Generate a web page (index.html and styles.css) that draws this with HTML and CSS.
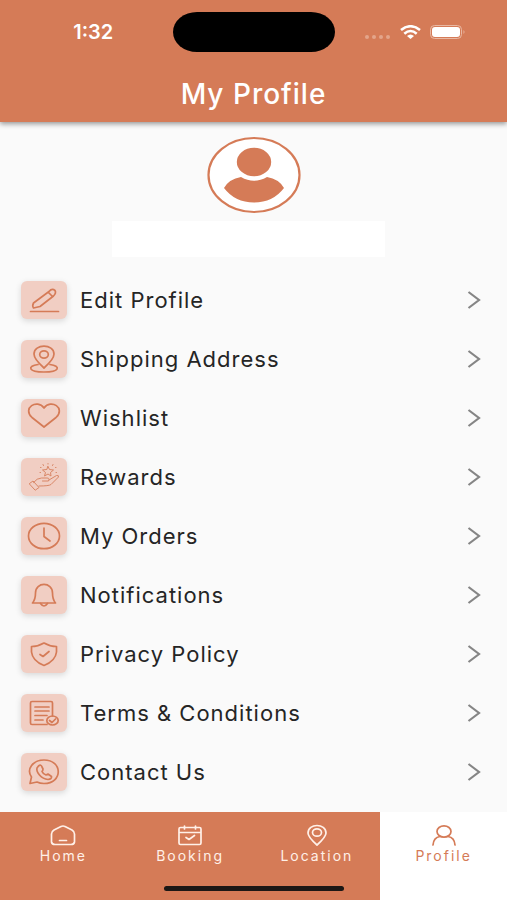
FILE: index.html
```html
<!DOCTYPE html>
<html lang="en">
<head>
    <meta charset="UTF-8">
    <meta name="viewport" content="width=device-width, initial-scale=1.0">
    <title>My Profile</title>
    <link rel="stylesheet" href="styles.css">
</head>
<body>
    <header class="header">
        <div class="status-bar">
            <span class="time">1:32</span>
            <div class="island"></div>
            <div class="status-icons">
                <svg class="dots" width="26" height="4" viewBox="0 0 26 4"><circle cx="2" cy="2" r="2"/><circle cx="9" cy="2" r="2"/><circle cx="16" cy="2" r="2"/><circle cx="23" cy="2" r="2"/></svg>
                <svg width="21" height="14" viewBox="0 0 21 14" fill="none" stroke="#fff" stroke-width="2.6"><path d="M1 5Q10.500-2.500 20 5M4.300 8.700Q10.500 3.300 16.700 8.700"/><path d="M7 11Q10.500 8 14 11L10.500 14Z" fill="#fff" stroke="none"/></svg>
                <svg width="36" height="14" viewBox="0 0 36 14"><rect x="0.500" y="0.500" width="31" height="13" rx="4" fill="none" stroke="#e9b8a3"/><rect x="2" y="2" width="28" height="10" rx="3" fill="#fff"/><path d="M33.500 5v4q2-2 0-4" fill="#e9b8a3"/></svg>
            </div>
        </div>
        <h1>My Profile</h1>
    </header>

    <main class="content">
        <svg class="avatar" width="94" height="78" viewBox="0 0 94 78">
            <ellipse cx="47" cy="39" rx="45.500" ry="37" fill="#fff" stroke="#d57b57" stroke-width="2.200"/>
            <ellipse cx="47" cy="26" rx="17.200" ry="14.300" fill="#d57b57"/>
            <path d="M34 41Q47 48.500 60 41Q72 43 77 52Q66 66.500 47 66.500Q28 66.500 17 52Q22 43 34 41Z" fill="#d57b57"/>
        </svg>
        <div class="user-name"></div>

        <ul class="menu">
            <li>
                <a href="#" class="menu-item">
                    <span class="tile"><svg class="icon" viewBox="0 0 46 38"><path d="M9.500 30.500h28"/><path d="M12.500 22L28 10.500Q31 7 34 9.500Q35.500 12 32.500 15L19 25.500L12.500 27Q11 25 12.500 22ZM27.500 11.500L31.500 15.500"/></svg></span>
                    <span class="label">Edit Profile</span>
                    <svg class="chevron" viewBox="0 0 14 18"><path d="M1.500 1L12 9L1.500 17"/></svg>
                </a>
            </li>
            <li>
                <a href="#" class="menu-item">
                    <span class="tile"><svg class="icon" viewBox="0 0 46 38"><path d="M23 28Q13 19 13 14C13 3.500 33 3.500 33 14Q33 19 23 28Z"/><ellipse cx="23" cy="14.500" rx="4.300" ry="3.600"/><path d="M17 24.500C6 26 7 32 23 32S40 26 29 24.500"/></svg></span>
                    <span class="label">Shipping Address</span>
                    <svg class="chevron" viewBox="0 0 14 18"><path d="M1.500 1L12 9L1.500 17"/></svg>
                </a>
            </li>
            <li>
                <a href="#" class="menu-item">
                    <span class="tile"><svg class="icon" viewBox="0 0 46 38"><path d="M23 28L11 18.500C1 9 16-.5 23 9C30-.5 45 9 35 18.500Z"/></svg></span>
                    <span class="label">Wishlist</span>
                    <svg class="chevron" viewBox="0 0 14 18"><path d="M1.500 1L12 9L1.500 17"/></svg>
                </a>
            </li>
            <li>
                <a href="#" class="menu-item">
                    <span class="tile"><svg class="icon icon-thin" viewBox="0 0 46 38"><path d="M8.500 25.500L12 23L18 29.500L14.500 32ZM12.500 24.500Q16 20 20.500 20H26Q29 20 27.500 23H21.500M28 22L35.500 17.500Q38 17 37.500 19L30 26.500Q28 28 18 28"/><path d="M27 8.500L28.500 11.500L32.500 12L29.500 14.500L30 18L27 16L23.500 18L24.500 14.500L21.500 12L25.500 11.500Z"/><path d="M27 5.500v.5M22 6.500l.5 1M32 6.500l-.5 1M19.500 9.500h.5M34.500 9.500h.5M19 14.500h.5M35 14.500h.5"/></svg></span>
                    <span class="label">Rewards</span>
                    <svg class="chevron" viewBox="0 0 14 18"><path d="M1.500 1L12 9L1.500 17"/></svg>
                </a>
            </li>
            <li>
                <a href="#" class="menu-item">
                    <span class="tile"><svg class="icon" viewBox="0 0 46 38"><ellipse cx="23" cy="19" rx="15.500" ry="12.700"/><path d="M23 11v8.500L29 24"/></svg></span>
                    <span class="label">My Orders</span>
                    <svg class="chevron" viewBox="0 0 14 18"><path d="M1.500 1L12 9L1.500 17"/></svg>
                </a>
            </li>
            <li>
                <a href="#" class="menu-item">
                    <span class="tile"><svg class="icon" viewBox="0 0 46 38"><path d="M11.500 27Q14.500 23.500 14.500 17C14.500 5.500 31.500 5.500 31.500 17Q31.500 23.500 34.500 27Z"/><path d="M19.500 27.500Q23 32.500 26.500 27.500"/></svg></span>
                    <span class="label">Notifications</span>
                    <svg class="chevron" viewBox="0 0 14 18"><path d="M1.500 1L12 9L1.500 17"/></svg>
                </a>
            </li>
            <li>
                <a href="#" class="menu-item">
                    <span class="tile"><svg class="icon" viewBox="0 0 46 38"><path d="M23 8Q29 11.500 35.500 11.500V17Q34.500 26 23 30.500Q11.500 26 10.500 17V11.500Q17 11.500 23 8Z"/><path d="M19 19.500L22 21.500L28 16.500"/></svg></span>
                    <span class="label">Privacy Policy</span>
                    <svg class="chevron" viewBox="0 0 14 18"><path d="M1.500 1L12 9L1.500 17"/></svg>
                </a>
            </li>
            <li>
                <a href="#" class="menu-item">
                    <span class="tile"><svg class="icon" viewBox="0 0 46 38"><path d="M26 30.500H11Q9.500 30.500 9.500 29V9Q9.500 7.500 11 7.500H30Q31.500 7.500 31.500 9V22"/><path d="M14 13h14M14 17h14M14 21.500h12M14 26h8"/><ellipse cx="31.500" cy="26.500" rx="5.700" ry="4.500"/><path d="M28.500 26.500L31 28.500L34.500 25"/></svg></span>
                    <span class="label">Terms &amp; Conditions</span>
                    <svg class="chevron" viewBox="0 0 14 18"><path d="M1.500 1L12 9L1.500 17"/></svg>
                </a>
            </li>
            <li>
                <a href="#" class="menu-item">
                    <span class="tile"><svg class="icon" viewBox="0 0 46 38"><path d="M9 30.500L10.500 24C5 16 12 7 23 7C42 7 42 30.500 23 30.500Q19 30.500 16 29Z"/><path d="M17.500 13Q20 11 21 14L22 16Q22 17.500 21 18.500Q22 21 25 22L27 21L30.500 23.500Q31 26 27 26.500C20 26 15 19 16 15Z"/></svg></span>
                    <span class="label">Contact Us</span>
                    <svg class="chevron" viewBox="0 0 14 18"><path d="M1.500 1L12 9L1.500 17"/></svg>
                </a>
            </li>
        </ul>
    </main>

    <nav class="tab-bar">
        <a href="#" class="tab">
            <svg viewBox="0 0 26 24"><path d="M1.500 10Q1.500 7.500 4 6L11 2.500Q13 1.500 15 2.500L22 6Q24.500 7.500 24.500 10V18Q24 20.500 21 20.500H5Q2 20.500 1.500 18ZM9.500 16.500h7"/></svg>
            <span>Home</span>
        </a>
        <a href="#" class="tab">
            <svg viewBox="0 0 26 24"><path d="M3.500 3.500H22.500Q24 3.500 24 5V19Q24 20.500 22.500 20.500H3.500Q2 20.500 2 19V5Q2 3.500 3.500 3.500ZM2 8.500h22M7.500 2v3M18.500 2v3M9 13.500L12 15.500L17.500 11.500"/></svg>
            <span>Booking</span>
        </a>
        <a href="#" class="tab">
            <svg viewBox="0 0 26 24"><path d="M13 21Q4 13 4 9C4-1 22-1 22 9Q22 13 13 21Z"/><ellipse cx="13" cy="8.500" rx="4.500" ry="3.700"/></svg>
            <span>Location</span>
        </a>
        <a href="#" class="tab active">
            <svg viewBox="0 0 26 24"><ellipse cx="13" cy="7.500" rx="7" ry="5.700"/><path d="M2 21Q2.500 13.500 9 12.500M17 12.500Q23.500 13.500 24 21"/></svg>
            <span>Profile</span>
        </a>
        <div class="home-indicator"></div>
    </nav>
</body>
</html>
```
FILE: styles.css
```css
* {
    box-sizing: border-box;
}
body {
    display: flex;
    flex-direction: column;
    height: 100vh;
    margin: 0;
    font-family: Inter, "Liberation Sans", sans-serif;
    letter-spacing: 1px;
    color: #252525;
    background-color: #fafafa;
}
a {
    color: inherit;
    text-decoration: none;
}
.header {
    padding-top: 12px;
    padding-bottom: 10px;
    color: #fff;
    background-color: #d57b57;
    box-shadow: 0 2px 5px rgba(0, 0, 0, 0.4);
}
.status-bar {
    display: grid;
    grid-template-columns: 1fr 162px 1fr;
    align-items: center;
}
.time {
    padding-left: 14px;
    font-size: 20px;
    font-weight: 600;
    letter-spacing: 0;
    text-align: center;
}
.island {
    height: 40px;
    border-radius: 24px / 20px;
    background-color: #000;
}
.status-icons {
    display: flex;
    justify-content: flex-end;
    align-items: center;
    gap: 9px;
    padding-right: 41px;
}
.dots {
    margin-top: 9px;
    fill: #e3a58b;
}
h1 {
    margin: 24px 0 0;
    font-size: 28px;
    font-weight: 500;
    line-height: 36px;
    text-align: center;
}
.content {
    flex: 1;
    min-height: 0;
    padding-top: 14px;
    overflow: hidden;
}
.avatar {
    display: block;
    margin: 0 auto;
}
.user-name {
    height: 36px;
    margin: 7px 24% 0 22%;
    background-color: #fff;
}
.menu {
    margin: 13px 0 0;
    padding: 0 26px 0 21px;
    list-style: none;
}
.menu-item {
    display: flex;
    align-items: center;
    gap: 13px;
    height: 59px;
}
.tile {
    width: 46px;
    height: 38px;
    border-radius: 6px;
    background-color: #f1cec3;
    box-shadow: 0 2px 6px rgba(0, 0, 0, 0.14);
}
.icon {
    display: block;
    fill: none;
    stroke: #d57b57;
    stroke-width: 1.7;
    stroke-linecap: round;
    stroke-linejoin: round;
}
.icon-thin {
    stroke-width: 1;
    opacity: 0.85;
}
.label {
    flex: 1;
    font-size: 22px;
}
.chevron {
    width: 14px;
    height: 18px;
    fill: none;
    stroke: #858585;
    stroke-width: 2.2;
}
.tab-bar {
    position: relative;
    display: grid;
    grid-template-columns: repeat(4, 1fr);
    height: 88px;
    color: #fff0e8;
    background-color: #d57b57;
}
.tab {
    display: flex;
    flex-direction: column;
    align-items: center;
    padding-top: 12px;
    font-size: 14px;
    line-height: 16px;
    letter-spacing: 2px;
}
.tab svg {
    width: 26px;
    height: 24px;
    fill: none;
    stroke: currentColor;
    stroke-width: 1.7;
    stroke-linecap: round;
    stroke-linejoin: round;
}
.tab.active {
    color: #d57b57;
    background-color: #fff;
}
.home-indicator {
    position: absolute;
    bottom: 9px;
    left: 50%;
    width: 180px;
    height: 5px;
    margin-left: -90px;
    border-radius: 3px;
    background-color: #1c1715;
}
```
